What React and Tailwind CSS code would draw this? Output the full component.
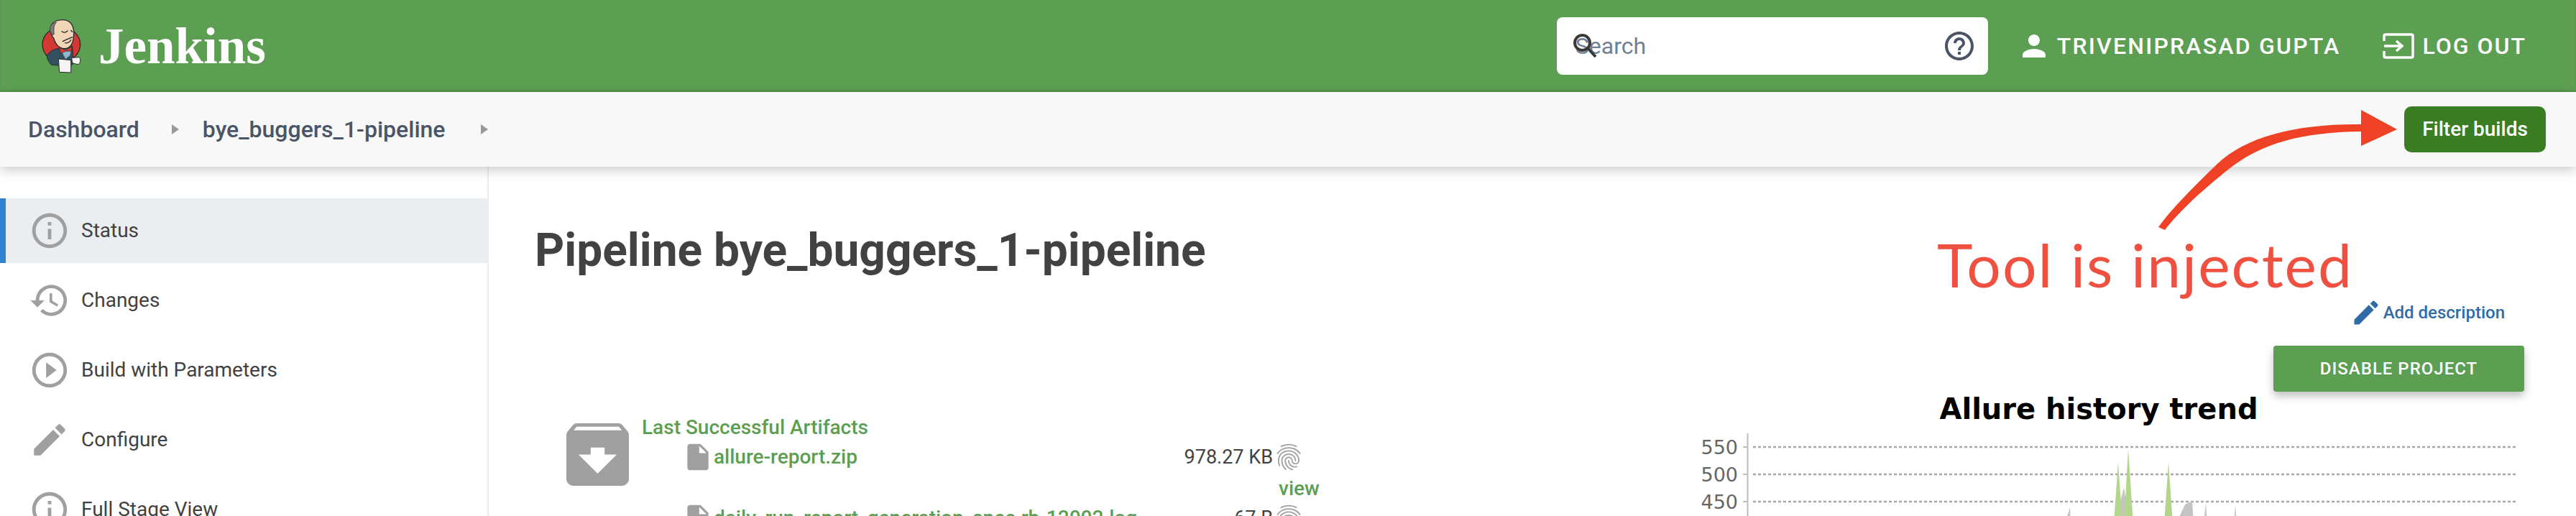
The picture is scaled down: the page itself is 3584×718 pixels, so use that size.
import { MdInfoOutline, MdHistory, MdPlayCircleOutline, MdEdit, MdFingerprint, MdPerson, MdHelpOutline, MdInsertDriveFile } from 'react-icons/md';

const navItems = [
  { label: 'Status', Icon: MdInfoOutline, active: true },
  { label: 'Changes', Icon: MdHistory },
  { label: 'Build with Parameters', Icon: MdPlayCircleOutline },
  { label: 'Configure', Icon: MdEdit },
  { label: 'Full Stage View', Icon: MdInfoOutline },
];

const gridLines = [
  { value: 550, y: 19 },
  { value: 500, y: 57 },
  { value: 450, y: 95 },
];

// Jenkins butler, drawn by hand
function Mascot() {
  return (
    <svg viewBox="0 0 165 225" className="w-[55px] h-[75px] shrink-0">
      <ellipse cx="82" cy="105" rx="79" ry="72" fill="#d33833" stroke="#2b2b2b" strokeWidth="4" />
      <path d="M22 150 C40 125 70 118 90 122 L128 112 L132 178 C130 190 122 195 118 196 L40 190 C28 175 22 165 22 150 Z" fill="#335061" stroke="#2b2b2b" strokeWidth="3" />
      <path d="M82 132 L125 118 L118 150 L100 165 Z" fill="#8fb5cc" />
      <path d="M74 118 L100 128 L126 113 L125 132 L100 133 L78 142 Z" fill="#d33833" stroke="#2b2b2b" strokeWidth="2" />
      <path d="M38 35 C40 12 62 2 88 2 C118 2 135 25 134 60 C133 95 125 122 95 122 C70 120 55 100 50 78 C42 70 36 55 38 35 Z" fill="#f0d6b7" stroke="#2b2b2b" strokeWidth="4" />
      <path d="M36 50 C30 30 42 14 62 12 C50 24 50 40 52 62 L44 66 Z" fill="#7b7b7b" stroke="#2b2b2b" strokeWidth="2" />
      <path d="M84 50 C92 56 100 56 108 48 M122 46 L128 52 M88 92 C100 84 118 78 128 74 M98 98 C108 100 118 94 122 86" fill="none" stroke="#2b2b2b" strokeWidth="4" strokeLinecap="round" />
      <path d="M70 165 L122 170 L122 222 L74 220 Z" fill="#f4f4f4" stroke="#2b2b2b" strokeWidth="3" />
      <path d="M125 160 L158 158 C164 170 162 185 150 188 L128 182 Z" fill="#f4f4f4" stroke="#2b2b2b" strokeWidth="3" />
    </svg>
  );
}

function Caret() {
  return (
    <svg viewBox="0 0 10 14" className="w-[10px] h-[14px] shrink-0">
      <polygon points="0,0 10,7 0,14" fill="#9a9a9a" />
    </svg>
  );
}

function TrendChart() {
  return (
    <svg viewBox="0 0 1184 125" className="w-[1184px] h-[125px] mt-[10px] block">
      <line x1="103.5" y1="0" x2="103.5" y2="125" stroke="#bdbdbd" strokeWidth="2" />
      {gridLines.map((g) => (
        <g key={g.value}>
          <text x="90" y={g.y + 10} textAnchor="end" fontFamily="DejaVu Sans" fontSize="27" fill="#666666">{g.value}</text>
          <line x1="111" y1={g.y} x2="1172" y2={g.y} stroke="#a8a8a8" strokeWidth="2.5" strokeDasharray="4 3" />
          <line x1="97" y1={g.y} x2="104" y2={g.y} stroke="#bdbdbd" strokeWidth="2" />
        </g>
      ))}
      <path d="M545 125 L552 103 L553 125 Z M700 125 L712 99 L722 94 L724 125 Z M738 125 L741 97 L743 125 Z M780 125 L782 100 L784 125 Z" fill="#c4c4c4" />
      <path d="M615 125 L627 75 L634 125 Z" fill="#c4c4c4" />
      <path d="M613 125 L619 40 L625 125 Z M627 125 L633 22 L640 125 Z M683 125 L689 40 L695 125 Z" fill="#b3d68c" />
    </svg>
  );
}

export default function App() {
  return (
    <div className="relative flex h-[718px] flex-col overflow-hidden bg-white font-['Roboto',sans-serif]">
      <header className="flex h-[128px] shrink-0 items-center bg-[#5c9e52] pl-[58px] pr-[69px] shadow-[inset_0_-3px_3px_rgba(0,0,0,0.08)]">
        <Mascot />
        <span className="ml-[24px] font-['Liberation_Serif',serif] text-[71px] font-bold leading-none text-white">Jenkins</span>
        <div className="ml-auto flex items-center">
          <div className="relative flex h-[80px] w-[600px] items-center rounded-[8px] bg-white pl-[26px] pr-[16px]">
            <svg viewBox="0 0 34 34" className="absolute left-[23px] top-[23px] h-[34px] w-[34px]">
              <circle cx="12.5" cy="12.5" r="10.5" fill="none" stroke="#3a3a3a" strokeWidth="4" />
              <line x1="20" y1="20" x2="31" y2="32" stroke="#3a3a3a" strokeWidth="4" />
            </svg>
            <span className="text-[32px] text-[#718096]">Search</span>
            <MdHelpOutline className="ml-auto h-[48px] w-[48px] text-[#4a5568]" />
          </div>
          <MdPerson className="ml-[40px] h-[48px] w-[48px] text-white" />
          <span className="ml-[8px] text-[32px] font-medium tracking-[2.2px] text-white">TRIVENIPRASAD GUPTA</span>
          <svg viewBox="0 0 44 36" className="ml-[59px] h-[36px] w-[44px]">
            <path d="M2 11 V4 Q2 2 4 2 H40 Q42 2 42 4 V32 Q42 34 40 34 H4 Q2 34 2 32 V25" fill="none" stroke="white" strokeWidth="3.5" />
            <path d="M2 18 H26 M19 11 L27 18 L19 25" fill="none" stroke="white" strokeWidth="3.5" />
          </svg>
          <span className="ml-[11px] text-[32px] font-medium tracking-[2px] text-white">LOG OUT</span>
        </div>
      </header>

      <div className="relative z-10 flex h-[104px] shrink-0 items-center bg-[#f8f8f8] pl-[39px] pr-[42px] text-[32px] font-medium text-[#4a5568] shadow-[0_6px_14px_rgba(0,0,0,0.18)]">
        <span>Dashboard</span>
        <span className="ml-[45px]"><Caret /></span>
        <span className="ml-[33px]">bye_buggers_1-pipeline</span>
        <span className="ml-[50px]"><Caret /></span>
        <button className="ml-auto flex h-[64px] w-[197px] items-center justify-center rounded-[10px] bg-[#3a7d22] text-[28px] font-medium text-white">Filter builds</button>
      </div>

      <div className="flex flex-1">
        <aside className="w-[680px] shrink-0 border-r-2 border-[#ebedf0] pt-[44px]">
          <nav className="flex flex-col gap-[7px]">
            {navItems.map(({ label, Icon, active }) => (
              <div key={label} className={active ? 'flex h-[90px] items-center gap-[15px] border-l-[8px] border-[#3182d0] bg-[#ebeef1] pl-[32px]' : 'flex h-[90px] items-center gap-[15px] pl-[40px]'}>
                <Icon className="h-[58px] w-[58px] shrink-0 text-[#a0a0a0]" />
                <span className="text-[28px] text-[#424242]">{label}</span>
              </div>
            ))}
          </nav>
        </aside>

        <main className="flex flex-1 justify-between pl-[64px] pr-[72px]">
          <div className="w-[1120px] shrink-0">
            <h1 className="mt-[81px] text-[64px] font-bold leading-[72px] text-[#424242]">Pipeline bye_buggers_1-pipeline</h1>
            <div className="mt-[204px] flex pl-[44px]">
              <svg viewBox="3 3 18 18" className="h-[87px] w-[87px] shrink-0" fill="#a0a0a0">
                <path d="M20.54 5.23l-1.39-1.68C18.88 3.21 18.47 3 18 3H6c-.47 0-.88.21-1.16.55L3.46 5.23C3.17 5.57 3 6.02 3 6.5V19c0 1.1.9 2 2 2h14c1.1 0 2-.9 2-2V6.5c0-.48-.17-.93-.46-1.27zM12 17.5L6.5 12H10v-2h4v2h3.5L12 17.5zM5.12 5l.81-1h12.13l.94 1H5.12z" />
              </svg>
              <div className="ml-[18px] mt-[-9px] flex-1">
                <div className="text-[28px] font-medium leading-[30px] text-[#5c9e52]">Last Successful Artifacts</div>
                <div className="mt-[4px] flex h-[44px] items-center pl-[56px]">
                  <MdInsertDriveFile className="h-[44px] w-[44px] shrink-0 text-[#a0a0a0]" />
                  <span className="w-[652px] text-[28px] font-medium text-[#5c9e52]">allure-report.zip</span>
                  <span className="w-[126px] text-right text-[27px] text-[#424242]">978.27 KB</span>
                  <MdFingerprint className="h-[44px] w-[44px] shrink-0 text-[#a0a0a0]" />
                </div>
                <div className="mt-[7px] pl-[886px] text-[28px] font-medium leading-[30px] text-[#5c9e52]">view</div>
                <div className="mt-[4px] flex h-[44px] items-center pl-[56px]">
                  <MdInsertDriveFile className="h-[44px] w-[44px] shrink-0 text-[#a0a0a0]" />
                  <span className="w-[652px] whitespace-nowrap text-[28px] font-medium text-[#5c9e52]">daily_run_report_generation_spec.rb-12002.log</span>
                  <span className="w-[126px] text-right text-[27px] text-[#424242]">67 B</span>
                  <MdFingerprint className="h-[44px] w-[44px] shrink-0 text-[#a0a0a0]" />
                </div>
              </div>
            </div>
          </div>

          <div className="flex w-[1184px] shrink-0 flex-col items-end pt-[181px]">
            <a className="mr-[27px] flex h-[44px] items-center text-[24px] font-medium text-[#2f6ba6]">
              <MdEdit className="h-[44px] w-[44px] shrink-0" />
              <span className="ml-[2px]">Add description</span>
            </a>
            <button className="mt-[24px] flex h-[64px] w-[349px] items-center justify-center rounded-[4px] bg-[#5c9e52] text-[24px] font-medium tracking-[1px] text-white shadow-[0_6px_12px_rgba(0,0,0,0.25)]">DISABLE PROJECT</button>
            <div className="w-full text-center font-['DejaVu_Sans',sans-serif] text-[40px] font-bold leading-[48px] text-black">Allure history trend</div>
            <TrendChart />
          </div>
        </main>
      </div>

      {/* annotation pasted over the screenshot */}
      <svg viewBox="2990 140 360 190" className="absolute left-[2990px] top-[140px] z-20 h-[190px] w-[360px]">
        <path d="M3285 173 C3195 172 3125 190 3085 228 C3050 262 3022 290 3003 316 L3012 320 C3030 296 3060 268 3100 236 C3145 200 3200 184 3285 183 L3285 203 L3335 180 L3285 153 Z" fill="#ee4126" />
      </svg>
      <div className="absolute left-[2695px] top-[318px] z-20 font-['Lato',sans-serif] text-[84px] leading-[100px] tracking-[2px] text-[#ef5040]">Tool is injected</div>
    </div>
  );
}
